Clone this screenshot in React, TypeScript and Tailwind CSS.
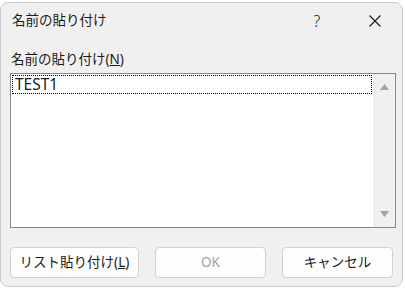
const font = "font-['Segoe_UI','Noto_Sans','Noto_Sans_CJK_JP',sans-serif]";

function Button({ label, disabled, width }: { label: React.ReactNode; disabled?: boolean; width: string }) {
  return (
    <button
      className={`${width} h-[31px] rounded-[4px] border border-[#d1d1d1] bg-[#fdfdfd] text-[13.5px] flex items-center justify-center ${
        disabled ? "text-[#a0a0a0]" : "text-[#1a1a1a]"
      }`}
    >
      {label}
    </button>
  );
}

export default function App() {
  return (
    <div className={`w-[405px] h-[289px] bg-white pt-[2px] ${font}`}>
      <div className="w-[403px] h-[285px] rounded-[8px] border border-[#cccccc] bg-[#f0f0f0] flex flex-col">
        {/* Title bar */}
        <div className="h-[35px] flex items-center pl-[11px] pr-[4px] text-[13.5px] text-[#1a1a1a]">
          <span className="flex-1">名前の貼り付け</span>
          <span className="w-[20px] text-center mr-[25px] text-[16px] font-light">?</span>
          <span className="w-[46px] flex justify-center">
            <svg width="12" height="12" viewBox="0 0 12 12" stroke="#1a1a1a" strokeWidth="1.1">
              <path d="M0.5 0.5L11.5 11.5M11.5 0.5L0.5 11.5" />
            </svg>
          </span>
        </div>

        <div className="px-[9px] flex flex-col">
          <div className="mt-[12px] h-[18px] text-[13.5px] leading-[18px] text-[#1a1a1a] pl-[1px]">
            名前の貼り付け(<span className="underline">N</span>)
          </div>

          {/* List box */}
          <div className="mt-[5px] w-[386px] h-[155px] border border-[#828790] bg-white flex">
            <div className="flex-1 p-[1px]">
              <div className="h-[19px] border border-dotted border-black text-[15.5px] leading-[17px] pl-[2px] text-[#1a1a1a]">
                TEST1
              </div>
            </div>
            <div className="w-[22px] bg-[#f0f0f0] flex flex-col items-center justify-between py-[10px]">
              <svg width="9" height="6" viewBox="0 0 9 6">
                <path d="M4.5 0L9 6H0z" fill="#a3a3a3" />
              </svg>
              <svg width="9" height="6" viewBox="0 0 9 6">
                <path d="M0 0H9L4.5 6z" fill="#a3a3a3" />
              </svg>
            </div>
          </div>

          {/* Buttons */}
          <div className="mt-[19px] flex gap-[16px]">
            <Button
              width="w-[130px]"
              label={
                <>
                  リスト貼り付け(<span className="underline">L</span>)
                </>
              }
            />
            <Button width="w-[112px]" label="OK" disabled />
            <Button width="w-[112px]" label="キャンセル" />
          </div>
        </div>
      </div>
    </div>
  );
}
